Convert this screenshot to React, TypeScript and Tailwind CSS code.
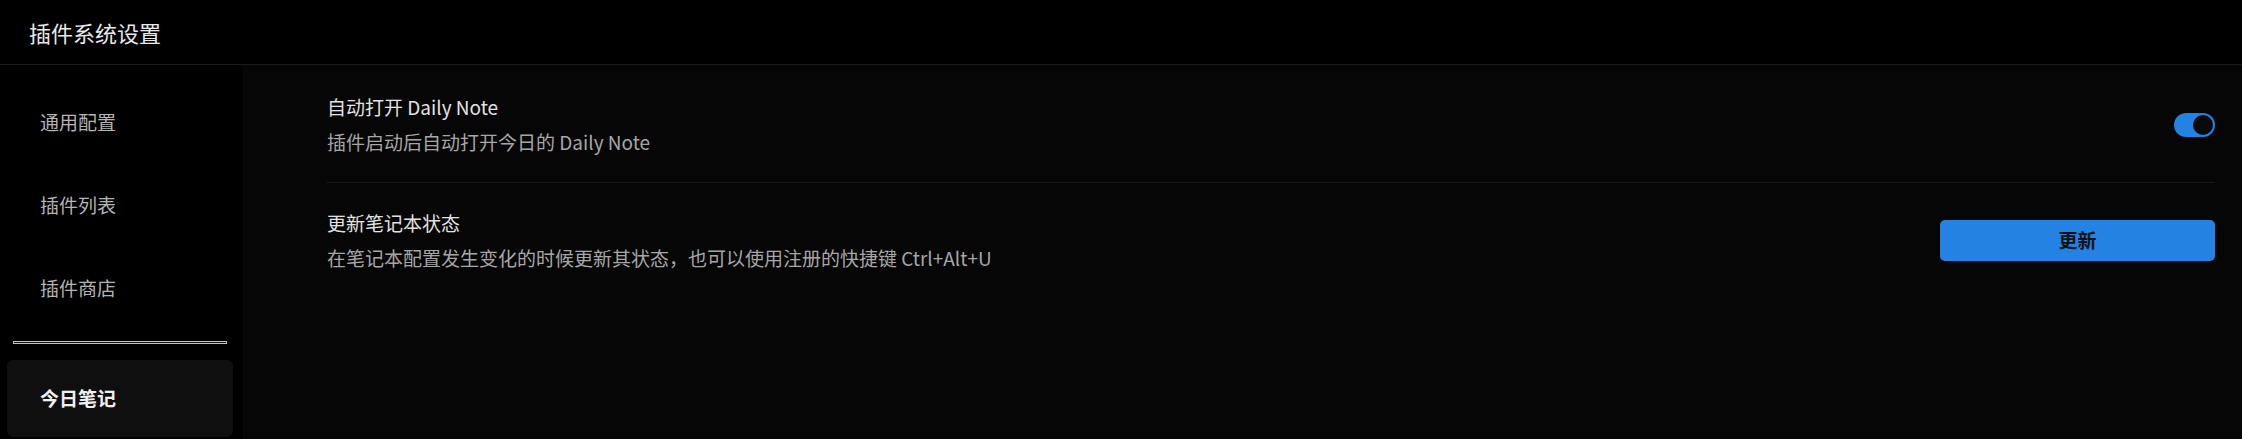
import { useState } from "react";

const font = { fontFamily: '"Noto Sans CJK SC", "Noto Sans", sans-serif' };

const navItems = ["通用配置", "插件列表", "插件商店"];

function Toggle({ on, onChange }: { on: boolean; onChange: () => void }) {
  return (
    <button
      type="button"
      onClick={onChange}
      className={`flex h-[24px] w-[41px] shrink-0 items-center rounded-full p-[2px] ${
        on ? "justify-end bg-[#2382e2]" : "justify-start bg-[#3a3a3a]"
      }`}
    >
      <span className="h-[20px] w-[20px] rounded-full bg-[#0a0a0a]" />
    </button>
  );
}

function SettingRow({
  title,
  desc,
  children,
  divider = false,
}: {
  title: string;
  desc: string;
  children: React.ReactNode;
  divider?: boolean;
}) {
  return (
    <div
      className={`flex items-center justify-between ${
        divider ? "border-b border-[#1a1a1a] pb-[26px] pt-[28px]" : "pt-[26px]"
      }`}
    >
      <div className="flex flex-col">
        <div className="text-[19px] leading-[28px] text-[#e2e2e2]">{title}</div>
        <div className="mt-[7px] text-[19px] leading-[28px] text-[#a6a6a6]">{desc}</div>
      </div>
      {children}
    </div>
  );
}

export default function App() {
  const [autoOpen, setAutoOpen] = useState(true);

  return (
    <div className="flex h-[439px] w-full flex-col overflow-hidden bg-black" style={font}>
      <header className="flex h-[65px] shrink-0 items-center border-b border-[#1a1a1a] px-[29px]">
        <h1 className="text-[22px] leading-none text-[#e8e8e8]">插件系统设置</h1>
      </header>

      <div className="flex min-h-0 flex-1">
        <aside className="flex w-[243px] shrink-0 flex-col bg-black pt-[16px]">
          {navItems.map((item) => (
            <div
              key={item}
              className="flex h-[83px] items-center px-[40px] text-[19px] text-[#b4b4b4]"
            >
              {item}
            </div>
          ))}
          <div className="mx-[13px] mt-[11px] h-[3px] w-[214px] border border-[#c4c4c4] bg-[#111]" />
          <div className="mx-[7px] mt-[16px] flex h-[77px] w-[226px] items-center rounded-[6px] bg-[#0f0f0f] pl-[33px] text-[19px] font-bold text-[#f0f0f0]">
            今日笔记
          </div>
        </aside>

        <main className="flex-1 bg-[#060606] pl-[84px] pr-[27px]">
          <SettingRow
            title="自动打开 Daily Note"
            desc="插件启动后自动打开今日的 Daily Note"
            divider
          >
            <Toggle on={autoOpen} onChange={() => setAutoOpen(!autoOpen)} />
          </SettingRow>
          <SettingRow
            title="更新笔记本状态"
            desc="在笔记本配置发生变化的时候更新其状态，也可以使用注册的快捷键 Ctrl+Alt+U"
          >
            <button
              type="button"
              className="h-[41px] w-[275px] shrink-0 rounded-[5px] bg-[#2382e2] text-[19px] font-semibold text-[#111]"
            >
              更新
            </button>
          </SettingRow>
        </main>
      </div>
    </div>
  );
}
